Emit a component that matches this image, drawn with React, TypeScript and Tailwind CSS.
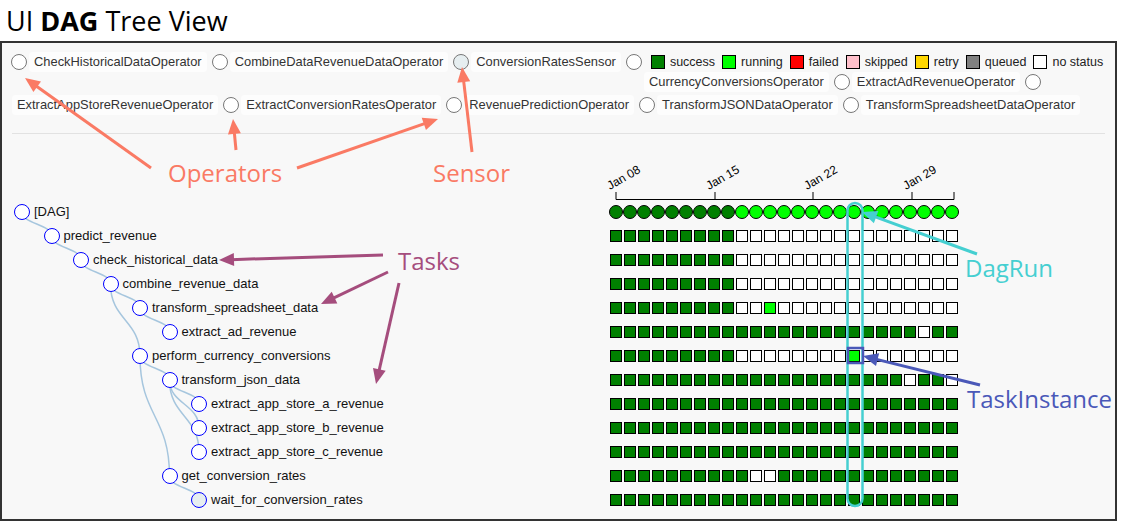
import React from 'react';

type Node = { name: string; depth: number; parent: number; runs: string; fill?: string };

const g = (n: number) => 'g'.repeat(n);
const w = (n: number) => 'w'.repeat(n);

const nodes: Node[] = [
  { name: '[DAG]', depth: 0, parent: -1, runs: '' },
  { name: 'predict_revenue', depth: 1, parent: 0, runs: g(9) + w(16) },
  { name: 'check_historical_data', depth: 2, parent: 1, runs: g(9) + w(16) },
  { name: 'combine_revenue_data', depth: 3, parent: 2, runs: g(9) + w(16) },
  { name: 'transform_spreadsheet_data', depth: 4, parent: 3, runs: g(9) + 'wwl' + w(13) },
  { name: 'extract_ad_revenue', depth: 5, parent: 4, runs: g(22) + 'wgg' },
  { name: 'perform_currency_conversions', depth: 4, parent: 3, runs: g(9) + w(8) + 'l' + w(7) },
  { name: 'transform_json_data', depth: 5, parent: 6, runs: g(21) + 'wggw' },
  { name: 'extract_app_store_a_revenue', depth: 6, parent: 7, runs: g(25) },
  { name: 'extract_app_store_b_revenue', depth: 6, parent: 7, runs: g(25) },
  { name: 'extract_app_store_c_revenue', depth: 6, parent: 7, runs: g(25) },
  { name: 'get_conversion_rates', depth: 5, parent: 6, runs: g(10) + 'ww' + g(13) },
  { name: 'wait_for_conversion_rates', depth: 6, parent: 11, runs: g(25), fill: 'bg-[#e6eef0]' },
];

const dagRuns = g(9) + 'l'.repeat(16);

const indent = ['pl-[12px]', 'pl-[41.5px]', 'pl-[71px]', 'pl-[100.5px]', 'pl-[130px]', 'pl-[159.5px]', 'pl-[189px]'];

const cellColor: Record<string, string> = {
  g: 'bg-[#008000]',
  l: 'bg-[#00ff00]',
  w: 'bg-white',
};

const states = [
  { label: 'success', color: 'bg-[#008000]' },
  { label: 'running', color: 'bg-[#00ff00]' },
  { label: 'failed', color: 'bg-[#ff0000]' },
  { label: 'skipped', color: 'bg-[#ffc0cb]' },
  { label: 'retry', color: 'bg-[#ffd700]' },
  { label: 'queued', color: 'bg-[#808080]' },
  { label: 'no status', color: 'bg-white' },
];

const ticks = [
  { x: 6, t: 'Jan 08' },
  { x: 105, t: 'Jan 15' },
  { x: 203, t: 'Jan 22' },
  { x: 302, t: 'Jan 29' },
];

function OpCircle({ sensor }: { sensor?: boolean }) {
  return (
    <span
      className={`w-4 h-4 mr-[2px] shrink-0 rounded-full border border-[#777] ${sensor ? 'bg-[#e6eef0]' : 'bg-white'}`}
    />
  );
}

function OpLabel({ children }: { children: React.ReactNode }) {
  return (
    <span className="h-5 mr-[5px] px-[5px] shrink-0 rounded-[4px] bg-[#fdfdfd] leading-5 whitespace-nowrap text-[12.9px] text-[#333]">
      {children}
    </span>
  );
}

function Arrow({ x1, y1, x2, y2, color }: { x1: number; y1: number; x2: number; y2: number; color: string }) {
  const len = Math.hypot(x2 - x1, y2 - y1);
  const ux = (x2 - x1) / len;
  const uy = (y2 - y1) / len;
  const bx = x2 - ux * 15;
  const by = y2 - uy * 15;
  const pts = `${x2},${y2} ${bx - uy * 6.5},${by + ux * 6.5} ${bx + uy * 6.5},${by - ux * 6.5}`;
  return (
    <g>
      <line x1={x1} y1={y1} x2={bx + ux * 3} y2={by + uy * 3} stroke={color} strokeWidth={3} />
      <polygon points={pts} fill={color} />
    </g>
  );
}

export default function App() {
  const nx = (d: number) => 20 + d * 29.5;
  const ny = (i: number) => 12 + i * 24;

  return (
    <div className="relative w-[1125px] h-[530px] overflow-hidden bg-white font-['Liberation_Sans',Arial,sans-serif]">
      <h1 className="h-[41px] pl-[6px] leading-[41px] text-[27px] text-black font-['Open_Sans',sans-serif]">
        UI <b>DAG</b> Tree View
      </h1>

      <div className="w-[1117px] h-[480px] border-2 border-[#333] bg-[#f8f8f8]">
        {/* legend */}
        <div className="flex items-center h-5 mt-[9px] pl-[9px]">
          <OpCircle />
          <OpLabel>CheckHistoricalDataOperator</OpLabel>
          <OpCircle />
          <OpLabel>CombineDataRevenueDataOperator</OpLabel>
          <OpCircle sensor />
          <OpLabel>ConversionRatesSensor</OpLabel>
          <OpCircle />
          <div className="flex items-center ml-[7px] whitespace-nowrap">
            {states.map((s) => (
              <span key={s.label} className="flex items-center mr-[7px] shrink-0">
                <span className={`w-[14px] h-[14px] border border-black ${s.color}`} />
                <span className="ml-[5px] text-[12.5px] text-[#222]">{s.label}</span>
              </span>
            ))}
          </div>
        </div>
        <div className="flex items-center h-[19px] ml-[642px]">
          <OpLabel>CurrencyConversionsOperator</OpLabel>
          <OpCircle />
          <OpLabel>ExtractAdRevenueOperator</OpLabel>
          <OpCircle />
        </div>
        <div className="flex items-center h-[21px] mt-[3px] pl-[10px]">
          <OpLabel>ExtractAppStoreRevenueOperator</OpLabel>
          <OpCircle />
          <OpLabel>ExtractConversionRatesOperator</OpLabel>
          <OpCircle />
          <OpLabel>RevenuePredictionOperator</OpLabel>
          <OpCircle />
          <OpLabel>TransformJSONDataOperator</OpLabel>
          <OpCircle />
          <OpLabel>TransformSpreadsheetDataOperator</OpLabel>
        </div>

        <div className="h-px mt-[18px] mx-[10px] bg-[#e2e2e2]" />

        {/* tree + grid */}
        <div className="relative">
          <svg className="absolute left-0 top-[66px]" width={608} height={312}>
            {nodes.map((n, i) => {
              if (n.parent < 0) return null;
              const p = nodes[n.parent];
              const px = nx(p.depth);
              const py = ny(n.parent);
              const cx = nx(n.depth);
              const cy = ny(i);
              const my = (py + cy) / 2;
              return (
                <path
                  key={n.name}
                  d={`M${px},${py} C${px},${my} ${cx},${my} ${cx},${cy}`}
                  fill="none"
                  stroke="#a6c6de"
                  strokeWidth={1.5}
                />
              );
            })}
          </svg>

          <div className="flex h-[66px]">
            <div className="w-[608px] shrink-0" />
            <svg width={360} height={66} className="overflow-visible">
              <path d="M6,58 V65.5 H344 V58" fill="none" stroke="#000" strokeWidth={1} />
              {ticks.slice(1).map((tk) => (
                <line key={tk.t} x1={tk.x} y1={58} x2={tk.x} y2={65.5} stroke="#000" strokeWidth={1} />
              ))}
              {ticks.map((tk) => (
                <text
                  key={tk.t}
                  x={tk.x - 6}
                  y={56}
                  fontSize={12}
                  fill="#000"
                  fontFamily="'Liberation Sans', Arial, sans-serif"
                  transform={`rotate(-30 ${tk.x - 6} 56)`}
                >
                  {tk.t}
                </text>
              ))}
            </svg>
          </div>

          {nodes.map((n, i) => (
            <div key={n.name} className="flex items-center h-6">
              <div className={`flex items-center w-[608px] shrink-0 ${indent[n.depth]}`}>
                <span
                  className={`relative w-4 h-4 shrink-0 rounded-full border-[1.5px] border-[#0000ff] ${n.fill ?? 'bg-white'}`}
                />
                <span className="ml-1 text-[13px] text-[#111] whitespace-nowrap">{n.name}</span>
              </div>
              {i === 0 ? (
                <div className="flex -ml-px">
                  {dagRuns.split('').map((s, j) => (
                    <span key={j} className={`w-[14px] h-[14px] rounded-full border-[1.5px] border-black ${cellColor[s]}`} />
                  ))}
                </div>
              ) : (
                <div className="flex gap-[2px]">
                  {n.runs.split('').map((s, j) => (
                    <span key={j} className={`w-3 h-3 border border-black ${cellColor[s]}`} />
                  ))}
                </div>
              )}
            </div>
          ))}
        </div>
      </div>

      {/* annotations */}
      <svg className="absolute inset-0 pointer-events-none" width={1125} height={530}>
        <rect x={847.5} y={203} width={15} height={303} rx={7.5} fill="none" stroke="#45cfd1" strokeWidth={2.5} />
        <rect x={848} y={348} width={15} height={15} fill="none" stroke="#4a58b8" strokeWidth={2.5} />
        <Arrow x1={151} y1={168} x2={25} y2={78} color="#fa7a64" />
        <Arrow x1={236} y1={150} x2={233} y2={119} color="#fa7a64" />
        <Arrow x1={297} y1={168} x2={438} y2={119} color="#fa7a64" />
        <Arrow x1={472} y1={152} x2={462} y2={67} color="#fa7a64" />
        <Arrow x1={383} y1={255} x2={219} y2={260} color="#a54d7d" />
        <Arrow x1={388} y1={272} x2={321} y2={304} color="#a54d7d" />
        <Arrow x1={399} y1={283} x2={376} y2={384} color="#a54d7d" />
        <Arrow x1={977} y1={254} x2={862} y2={212} color="#45cfd1" />
        <Arrow x1={980} y1={385} x2={863} y2={356} color="#4a58b8" />
      </svg>
      <span className="absolute left-[168px] top-[161px] leading-none text-[24px] text-[#fa7a64] font-['Open_Sans',sans-serif]">
        Operators
      </span>
      <span className="absolute left-[433px] top-[161px] leading-none text-[24px] text-[#fa7a64] font-['Open_Sans',sans-serif]">
        Sensor
      </span>
      <span className="absolute left-[398px] top-[249px] leading-none text-[24px] text-[#a54d7d] font-['Open_Sans',sans-serif]">
        Tasks
      </span>
      <span className="absolute left-[965px] top-[256px] leading-none text-[24px] text-[#45cfd1] font-['Open_Sans',sans-serif]">
        DagRun
      </span>
      <span className="absolute left-[967px] top-[387px] leading-none text-[24px] text-[#4a58b8] font-['Open_Sans',sans-serif]">
        TaskInstance
      </span>
    </div>
  );
}
